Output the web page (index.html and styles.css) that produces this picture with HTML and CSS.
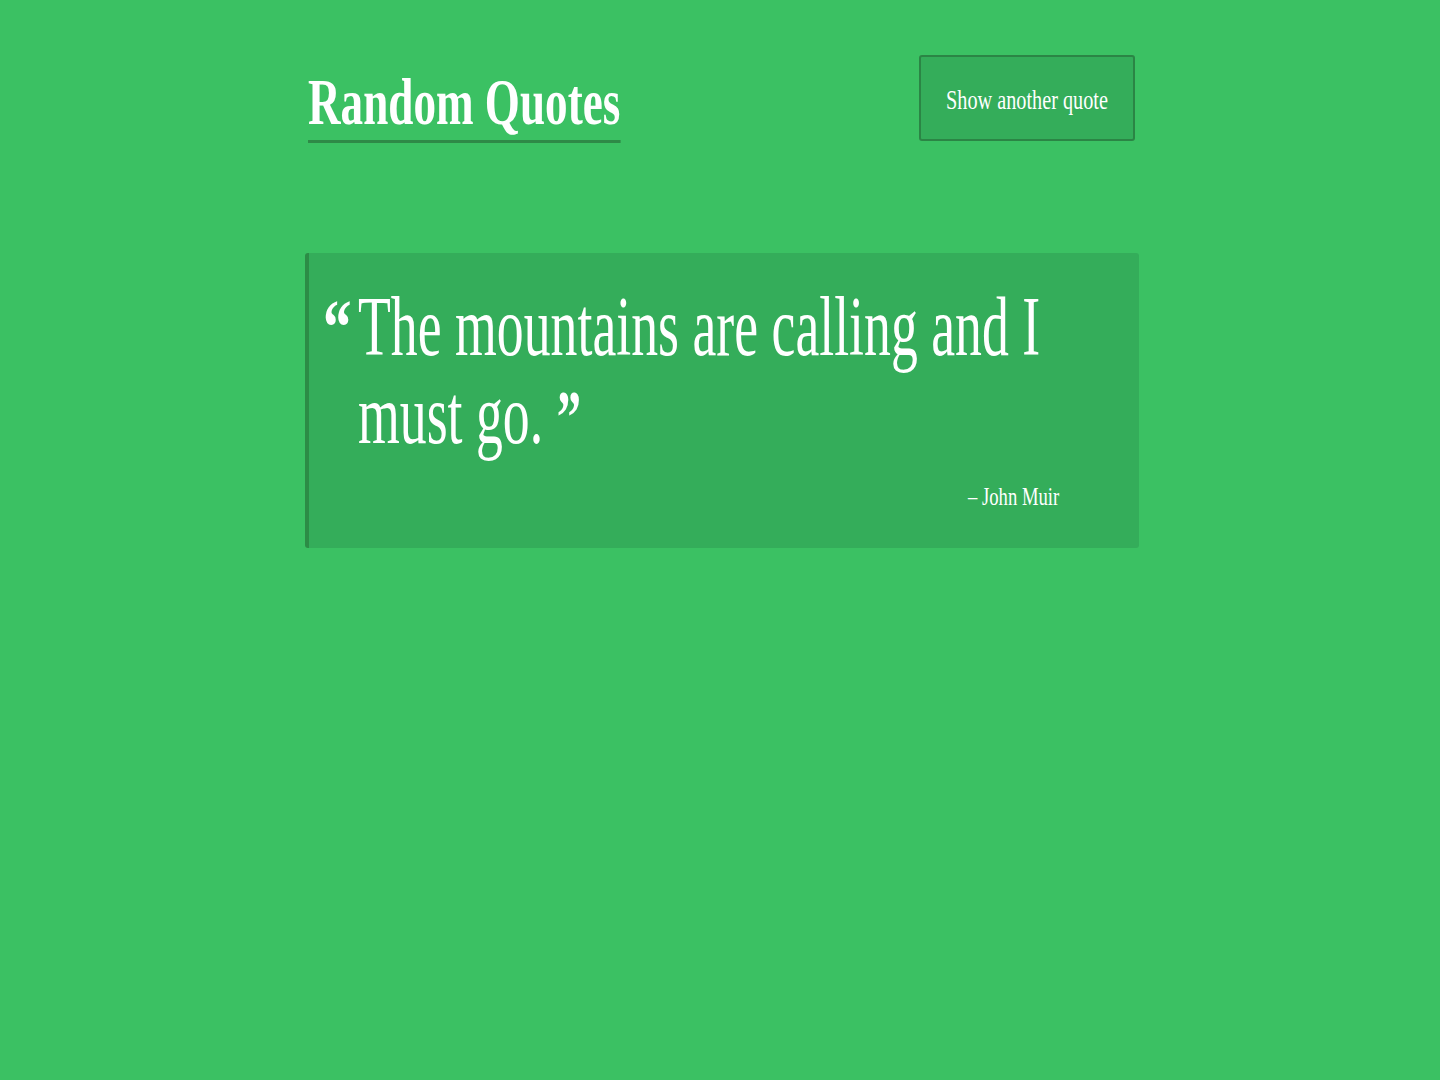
FILE: index.html
```html
<!DOCTYPE html>
<html lang="en">
<head>
<meta charset="utf-8">
<title>Random Quotes</title>
<link rel="stylesheet" href="styles.css">
</head>
<body>
<div class="page">
  <header class="header">
    <h1 class="title">Random Quotes</h1>
    <button class="btn" type="button"><span class="btn-label">Show another quote</span></button>
  </header>
  <blockquote class="quote">
    <div class="quote-row">
      <span class="open-mark">“</span>
      <div class="quote-text">
        <p class="quote-inner">The mountains are calling and I must go. <span class="close-mark">”</span></p>
      </div>
    </div>
    <footer class="author"><span class="author-name">– John Muir</span></footer>
  </blockquote>
</div>
</body>
</html>
```

FILE: styles.css
```css
html, body {
  margin: 0;
  padding: 0;
  background: #3bc163;
  overflow-x: hidden;
}

body {
  font-family: "Liberation Serif", "Times New Roman", serif;
  color: #ffffff;
  min-height: 1080px;
}

.page {
  width: 834px;
  margin-left: 305px;
}

.header {
  display: flex;
  justify-content: space-between;
  align-items: flex-start;
  padding: 55px 4px 0 3px;
}

.title {
  margin: 14px 0 0 0;
  display: inline-block;
  font-size: 66px;
  line-height: 66px;
  font-weight: 700;
  padding-bottom: 5px;
  border-bottom: 3px solid #2e8a47;
  transform: scaleX(0.684);
  transform-origin: left top;
  white-space: nowrap;
}

.btn {
  width: 216px;
  height: 86px;
  box-sizing: border-box;
  background: #34ad5a;
  border: 2px solid #2b8545;
  border-radius: 3px;
  color: #ffffff;
  font-family: "Liberation Serif", "Times New Roman", serif;
  font-size: 28px;
  padding: 4px 0 0 0;
  display: flex;
  align-items: center;
  justify-content: center;
  cursor: pointer;
}

.btn-label {
  display: inline-block;
  white-space: nowrap;
  transform: scaleX(0.723);
  transform-origin: center;
}

.quote {
  margin: 110px 0 0 0;
  background: #34ad5a;
  border-left: 4px solid #2c8c46;
  border-radius: 3px;
  padding: 30px 80px 36px 14px;
}

.quote-row {
  display: flex;
  align-items: flex-start;
}

.open-mark {
  flex: 0 0 35px;
  width: 35px;
  min-width: 0;
  overflow: visible;
  font-size: 78px;
  line-height: 88px;
  font-weight: 700;
  display: block;
  transform: scaleX(0.73);
  transform-origin: left top;
}

.quote-text {
  width: 702px;
}

.quote-inner {
  margin: 0;
  width: 1097px;
  font-size: 84px;
  line-height: 88px;
  transform: scaleX(0.64);
  transform-origin: left top;
}

.close-mark {
  font-size: 76px;
  font-weight: 700;
  line-height: 0;
}

.author {
  margin-top: 23px;
  text-align: right;
  font-size: 26px;
  line-height: 30px;
}

.author-name {
  display: inline-block;
  white-space: nowrap;
  transform: scaleX(0.716);
  transform-origin: right center;
}
```
